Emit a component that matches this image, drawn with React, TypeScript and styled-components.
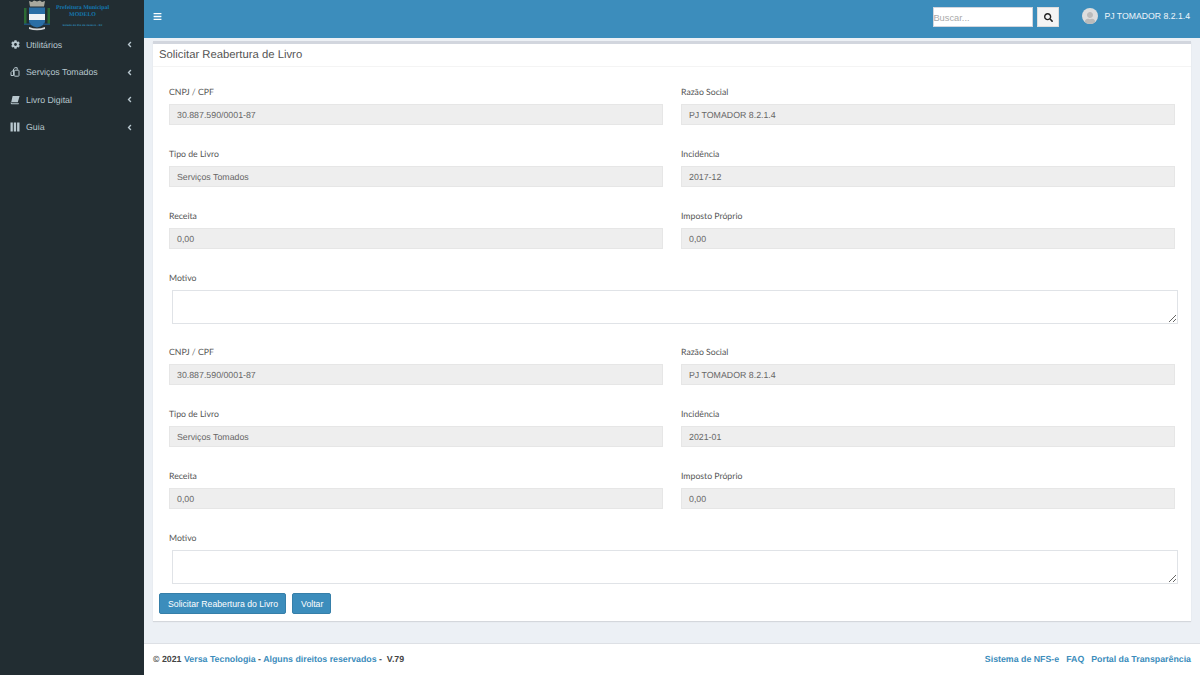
import React from 'react';
import styled, { createGlobalStyle } from 'styled-components';
import { FaAngleLeft, FaBars, FaCog, FaSearch, FaUser } from 'react-icons/fa';

const Global = createGlobalStyle`
  html, body { margin: 0; padding: 0; height: 675px; overflow: hidden; background: #ecf0f5; }
  * { box-sizing: border-box; }
  body { text-rendering: geometricPrecision; }
`;
const Shell = styled.div`
  width: 1200px; height: 675px; display: grid; grid-template-columns: 144px 1fr;
  font-family: "Liberation Sans", Arial, sans-serif;
`;
const Sidebar = styled.aside`
  background: #222d32; color: #b8c7ce; display: flex; flex-direction: column;
`;
const LogoBox = styled.div`
  height: 31px; display: flex; align-items: flex-start; padding-left: 24px; gap: 6px; overflow: hidden;
`;
const LogoText = styled.div`
  display: flex; flex-direction: column; align-items: center; color: #1478b0; font-family: "Liberation Serif", serif; font-weight: 700; white-space: nowrap;
  font-size: 5.9px; line-height: 7px; padding-top: 5px;
  small { font-family: "Liberation Sans", sans-serif; font-size: 2.6px; line-height: 3px; margin-top: 5px; color: #2f8dbd; letter-spacing: .1px; }
`;
const Menu = styled.nav`display: flex; flex-direction: column;`;
const MenuItem = styled.div`
  height: 27.5px; display: flex; align-items: center; padding: 0 10px; font-size: 8.8px; color: #b8c7ce;
  span { flex: 1; margin-left: 6px; }
  svg { flex: none; }
`;
const IconSlot = styled.i`
  width: 10px; display: flex; justify-content: center; font-style: normal; font-size: 9px;
`;
const Main = styled.main`display: flex; flex-direction: column; min-width: 0;`;
const Topbar = styled.header`
  height: 38px; flex: none; background: #3c8dbc; display: flex; align-items: center; padding: 0 10px 0 9px; color: #fff;
`;
const Burger = styled.div`font-size: 9px; display: flex; margin-bottom: 6px;`;
const Spacer = styled.div`flex: 1;`;
const SearchInput = styled.input`
  width: 100px; height: 20px; border: 0; padding: 2px 0 0; font-size: 9.3px; background: #fff; margin-bottom: 4px; font-family: inherit; box-shadow: 0 0 0 1px #d2d6de inset;
  &::placeholder { color: #aaa; }
`;
const SearchButton = styled.button`
  width: 22px; height: 20px; margin-left: 4px; margin-bottom: 4px; background: #f4f4f4; border: 1px solid #ddd; color: #222; display: flex; align-items: center; justify-content: center; font-size: 9px; padding: 0;
`;
const Avatar = styled.div`
  width: 16px; height: 16px; border-radius: 50%; background: #ddd; margin-left: 23px; margin-bottom: 6px; overflow: hidden; display: flex; justify-content: center; align-items: flex-end; color: #bbb; font-size: 12px;
`;
const UserName = styled.div`font-size: 8.7px; margin-left: 6px; margin-bottom: 6px; white-space: nowrap; color: #eef5fa;`;
const Content = styled.div`flex: 1; padding: 3px 9px 22px; min-height: 0;`;
const Box = styled.section`
  background: #fff; border-top: 3px solid #d2d6de; height: 580px; box-shadow: 0 1px 1px rgba(0,0,0,.1); display: flex; flex-direction: column;
`;
const BoxHeader = styled.div`
  flex: none; height: 23px; padding-left: 6px; display: flex; align-items: center; font-size: 11.3px; color: #555; border-bottom: 1px solid #f4f4f4;
`;
const Body = styled.div`padding: 18px 16px 0; display: flex; flex-direction: column;`;
const Block = styled.div`display: flex; flex-direction: column;`;
const Grid = styled.div`display: grid; grid-template-columns: 494px 494px; column-gap: 18px;`;
const Field = styled.div`height: 62px; display: flex; flex-direction: column;`;
const Label = styled.label`
  font-family: Lato, sans-serif; font-size: 8.7px; line-height: 14px; height: 19px; color: #555; display: block;
`;
const Value = styled.div`
  height: 21px; background: #eee; border: 1px solid #e6e6e6; padding: 0 7px; display: flex; align-items: center; font-size: 8.8px; color: #666;
`;
const Area = styled.textarea`
  display: block; width: 1006px; height: 34px; margin-left: 3px; border: 1px solid #e0e3e7; background: #fff; resize: both;
`;
const MotivoField = styled.div`height: 74px; display: flex; flex-direction: column;`;
const Actions = styled.div`display: flex; gap: 6px; margin: -12px 0 0 -10px;`;
const Btn = styled.button`
  height: 21px; padding: 0 7px 0 8px; background: #3c8dbc; border: 1px solid #367fa9; border-radius: 2px; color: #fff; font-size: 8.7px; font-family: inherit; white-space: nowrap;
`;
const Footer = styled.footer`
  height: 32px; flex: none; background: #fff; border-top: 1px solid #dde0e5; display: flex; justify-content: space-between; align-items: center; padding: 0 9px 2px; font-size: 8.8px; font-weight: 700; color: #444;
`;
const FootLinks = styled.div`display: flex; gap: 7px;`;
const Link = styled.a`color: #3c8dbc; text-decoration: none;`;

const FilesIcon = () => (
  <svg width="10" height="10" viewBox="0 0 10 10" fill="none" stroke="currentColor" strokeWidth="1">
    <path d="M1 5.500L3.500 3v5.500H1z" />
    <path d="M3.500 3V2L5 .7h2.200v2" />
    <rect x="4.200" y="3.200" width="4.800" height="6" rx=".6" />
  </svg>
);
const BookIcon = () => (
  <svg width="10" height="10" viewBox="0 0 10 10" fill="currentColor">
    <path d="M2.600 1h7l-1.800 6.200H1.200z" />
    <path d="M.6 7.400c0 1.400.8 1.800 1.600 1.800h6.400l.4-1H2.400c-.8 0-1-.4-1-.8z" />
  </svg>
);
const ColumnsIcon = () => (
  <svg width="10" height="10" viewBox="0 0 10 10" fill="currentColor">
    <rect x=".5" y=".5" width="2.300" height="9" />
    <rect x="3.800" y=".5" width="2.300" height="9" />
    <rect x="7.100" y=".5" width="2.400" height="9" />
  </svg>
);

const items = [
  { label: 'Utilitários', icon: <FaCog /> },
  { label: 'Serviços Tomados', icon: <FilesIcon /> },
  { label: 'Livro Digital', icon: <BookIcon /> },
  { label: 'Guia', icon: <ColumnsIcon /> },
];

type BlockData = { inc: string };
const FormBlock = ({ inc }: BlockData) => (
  <Block>
    <Grid>
      <Field><Label>CNPJ / CPF</Label><Value>30.887.590/0001-87</Value></Field>
      <Field><Label>Razão Social</Label><Value>PJ TOMADOR 8.2.1.4</Value></Field>
      <Field><Label>Tipo de Livro</Label><Value>Serviços Tomados</Value></Field>
      <Field><Label>Incidência</Label><Value>{inc}</Value></Field>
      <Field><Label>Receita</Label><Value>0,00</Value></Field>
      <Field><Label>Imposto Próprio</Label><Value>0,00</Value></Field>
    </Grid>
    <MotivoField>
      <Label>Motivo</Label>
      <Area />
    </MotivoField>
  </Block>
);

export default function App() {
  return (
    <Shell>
      <Global />
      <Sidebar>
        <LogoBox>
          <svg width="26" height="32" viewBox="0 0 26 32">
            <path d="M5 1l3 1 2-1.500 3 1 3-1 2 1.500 3-1-1 5.500H6z" fill="#a9a99f" />
            <rect x="0" y="8" width="2.500" height="16" fill="#2c6b34" />
            <rect x="23.500" y="8" width="2.500" height="16" fill="#2c6b34" />
            <path d="M5 7.500h16v14q0 4-8 6q-8-2-8-6z" fill="#2a6ea5" />
            <rect x="5" y="14" width="16" height="6" fill="#eef2f5" />
            <path d="M5 27q8 3 16 0v2q-8 2.500-16 0z" fill="#d8d8d8" />
            <path d="M0 23.500h7v1.500H0zM19 23.500h7v1.500h-7z" fill="#1d4f7a" />
          </svg>
          <LogoText>
            <div>Prefeitura Municipal</div>
            <div>MODELO</div>
            <small>Estado do Rio de Janeiro - RJ</small>
          </LogoText>
        </LogoBox>
        <Menu>
          {items.map(i => (
            <MenuItem key={i.label}>
              <IconSlot>{i.icon}</IconSlot>
              <span>{i.label}</span>
              <FaAngleLeft size={9} />
            </MenuItem>
          ))}
        </Menu>
      </Sidebar>
      <Main>
        <Topbar>
          <Burger><FaBars /></Burger>
          <Spacer />
          <SearchInput placeholder="Buscar..." />
          <SearchButton><FaSearch /></SearchButton>
          <Avatar><FaUser /></Avatar>
          <UserName>PJ TOMADOR 8.2.1.4</UserName>
        </Topbar>
        <Content>
          <Box>
            <BoxHeader>Solicitar Reabertura de Livro</BoxHeader>
            <Body>
              <FormBlock inc="2017-12" />
              <FormBlock inc="2021-01" />
              <Actions>
                <Btn>Solicitar Reabertura do Livro</Btn>
                <Btn>Voltar</Btn>
              </Actions>
            </Body>
          </Box>
        </Content>
        <Footer>
          <div>© 2021 <Link>Versa Tecnologia</Link> - <Link>Alguns direitos reservados</Link> -&nbsp; V.79</div>
          <FootLinks>
            <Link>Sistema de NFS-e</Link>
            <Link>FAQ</Link>
            <Link>Portal da Transparência</Link>
          </FootLinks>
        </Footer>
      </Main>
    </Shell>
  );
}
